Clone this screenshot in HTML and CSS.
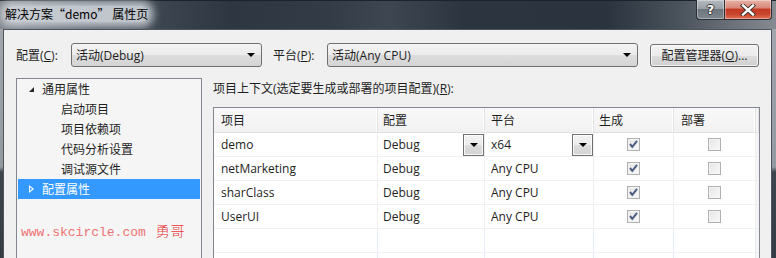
FILE: index.html
```html
<!DOCTYPE html>
<html lang="zh-CN">
<head>
    <meta charset="UTF-8">
    <title>解决方案“demo” 属性页</title>
    <link rel="stylesheet" href="styles.css">
</head>
<body>
    <div class="window">
        <div class="titlebar">
            <span class="title">解决方案“demo” 属性页</span>
            <div class="caption">
                <span class="cap-btn help">?</span>
                <span class="cap-btn close">
                    <svg width="16" height="12" viewBox="0 0 16 12">
                        <path d="M3 1.5 L13 10.5 M13 1.5 L3 10.5" stroke="#3a2a28" stroke-width="4.2" stroke-linecap="square"/>
                        <path d="M3 1.5 L13 10.5 M13 1.5 L3 10.5" stroke="#ffffff" stroke-width="2.4" stroke-linecap="square"/>
                    </svg>
                </span>
            </div>
        </div>
        <div class="frame">
            <div class="client">
                <div class="config-row">
                    <span class="cfg-label lbl-config">配置(<u>C</u>):</span>
                    <div class="combo combo-config">
                        <span>活动(Debug)</span>
                        <span class="arrow"></span>
                    </div>
                    <span class="cfg-label lbl-platform">平台(<u>P</u>):</span>
                    <div class="combo combo-platform">
                        <span>活动(Any CPU)</span>
                        <span class="arrow"></span>
                    </div>
                    <div class="btn-manager">配置管理器(<u>O</u>)...</div>
                </div>

                <div class="main">
                    <div class="tree">
                        <div class="node root"><span class="tri-open"></span>通用属性</div>
                        <div class="node child">启动项目</div>
                        <div class="node child">项目依赖项</div>
                        <div class="node child">代码分析设置</div>
                        <div class="node child">调试源文件</div>
                        <div class="node root selected"><span class="tri-closed"></span>配置属性</div>
                        <div class="watermark">www.skcircle.com <span class="wm-cn">勇哥</span></div>
                    </div>

                    <div class="context">
                        <div class="context-label">项目上下文(选定要生成或部署的项目配置)(<u>R</u>):</div>
                        <div class="grid">
                            <div class="grow header">
                                <div class="cell c1">项目</div>
                                <div class="cell c2">配置</div>
                                <div class="cell c3">平台</div>
                                <div class="cell c4">生成</div>
                                <div class="cell c5">部署</div>
                                <div class="cell c6"></div>
                            </div>
                            <div class="grow">
                                <div class="cell c1">demo</div>
                                <div class="cell c2 has-drop">Debug<span class="drop"><span class="arrow"></span></span></div>
                                <div class="cell c3 has-drop">x64<span class="drop"><span class="arrow"></span></span></div>
                                <div class="cell c4 center"><span class="check"><svg width="11" height="11" viewBox="0 0 11 11"><path d="M2 5 L4.3 7.8 L9 1.8" fill="none" stroke="#4c5f86" stroke-width="2"/></svg></span></div>
                                <div class="cell c5 center"><span class="check"></span></div>
                                <div class="cell c6"></div>
                            </div>
                            <div class="grow">
                                <div class="cell c1">netMarketing</div>
                                <div class="cell c2">Debug</div>
                                <div class="cell c3">Any CPU</div>
                                <div class="cell c4 center"><span class="check"><svg width="11" height="11" viewBox="0 0 11 11"><path d="M2 5 L4.3 7.8 L9 1.8" fill="none" stroke="#4c5f86" stroke-width="2"/></svg></span></div>
                                <div class="cell c5 center"><span class="check"></span></div>
                                <div class="cell c6"></div>
                            </div>
                            <div class="grow">
                                <div class="cell c1">sharClass</div>
                                <div class="cell c2">Debug</div>
                                <div class="cell c3">Any CPU</div>
                                <div class="cell c4 center"><span class="check"><svg width="11" height="11" viewBox="0 0 11 11"><path d="M2 5 L4.3 7.8 L9 1.8" fill="none" stroke="#4c5f86" stroke-width="2"/></svg></span></div>
                                <div class="cell c5 center"><span class="check"></span></div>
                                <div class="cell c6"></div>
                            </div>
                            <div class="grow">
                                <div class="cell c1">UserUI</div>
                                <div class="cell c2">Debug</div>
                                <div class="cell c3">Any CPU</div>
                                <div class="cell c4 center"><span class="check"><svg width="11" height="11" viewBox="0 0 11 11"><path d="M2 5 L4.3 7.8 L9 1.8" fill="none" stroke="#4c5f86" stroke-width="2"/></svg></span></div>
                                <div class="cell c5 center"><span class="check"></span></div>
                                <div class="cell c6"></div>
                            </div>
                            <div class="grow empty">
                                <div class="cell c1"></div>
                                <div class="cell c2"></div>
                                <div class="cell c3"></div>
                                <div class="cell c4"></div>
                                <div class="cell c5"></div>
                                <div class="cell c6"></div>
                            </div>
                            <div class="grow empty">
                                <div class="cell c1"></div>
                                <div class="cell c2"></div>
                                <div class="cell c3"></div>
                                <div class="cell c4"></div>
                                <div class="cell c5"></div>
                                <div class="cell c6"></div>
                            </div>
                        </div>
                    </div>
                </div>
            </div>
        </div>
    </div>
</body>
</html>
```

FILE: styles.css
```css
body {
    margin: 0;
    width: 776px;
    height: 258px;
    overflow: hidden;
    font-family: "Open Sans", "Noto Sans CJK SC", sans-serif;
    font-size: 12px;
    color: #1e1e1e;
}

.window {
    display: flex;
    flex-direction: column;
    height: 258px;
    overflow: hidden;
}

/* 标题栏 */
.titlebar {
    height: 29px;
    flex: none;
    display: flex;
    align-items: flex-start;
    background: linear-gradient(to right, #7a8087 0%, #4a535d 12%, #2d3641 30%, #323b46 42%, #3d4651 50%, #2b343f 60%, #2a333e 78%, #4c545d 88%, #868b91 100%);
    border-top: 1px solid #1e232a;
    box-sizing: border-box;
}

.title {
    margin: 5px 0 0 5px;
    line-height: 16px;
    color: #000;
    background: rgba(214, 219, 224, 0.85);
    box-shadow: 0 0 8px 5px rgba(214, 219, 224, 0.85);
    border-radius: 6px;
    font-family: "Noto Sans CJK SC", sans-serif;
    font-size: 12px;
}

.caption {
    margin-left: auto;
    margin-right: 4px;
    display: flex;
    margin-top: -1px;
}

.cap-btn {
    height: 20px;
    box-sizing: border-box;
    border: 1px solid #2c3036;
    border-top: none;
    display: flex;
    align-items: center;
    justify-content: center;
    box-shadow: inset 0 0 0 1px rgba(255, 255, 255, 0.35);
}

.help {
    width: 28px;
    border-radius: 0 0 0 4px;
    border-right: none;
    background: linear-gradient(#b5bbc1 0%, #99a0a7 45%, #6e757d 50%, #7f868d 100%);
    color: #fff;
    font-family: "DejaVu Sans", sans-serif;
    font-weight: bold;
    font-size: 13px;
    text-shadow: 1px 0 0 #333, -1px 0 0 #333, 0 1px 0 #333, 0 -1px 0 #333;
}

.close {
    width: 48px;
    border-radius: 0 0 4px 0;
    background: linear-gradient(#e6b2a6 0%, #d9897a 40%, #c43b25 50%, #c9452e 75%, #dd7358 100%);
}

/* 外框 */
.frame {
    flex: 1;
    display: flex;
    padding: 0 4px 0 3px;
    background: linear-gradient(#a0a6ac 0px, #9299a0 138px, #3c444d 143px, #343b44 100%);
    min-height: 0;
}

.client {
    flex: 1;
    border: 1px solid #4e555c;
    border-bottom: none;
    background: #f0f0f0;
    padding: 13px 11px 0 12px;
    overflow: hidden;
}

/* 配置行 */
.config-row {
    display: flex;
    align-items: center;
    height: 24px;
}

.cfg-label {
    flex: none;
}

.lbl-config {
    width: 55px;
}

.lbl-platform {
    width: 54px;
    margin-left: 11px;
}

.combo {
    height: 24px;
    box-sizing: border-box;
    border: 1px solid #707070;
    border-radius: 3px;
    background: linear-gradient(#f3f3f3 0%, #ebebeb 50%, #dddddd 51%, #d4d4d4 100%);
    display: flex;
    align-items: center;
    padding: 0 6px 0 4px;
    flex: none;
}

.combo-config {
    width: 191px;
}

.combo-platform {
    width: 311px;
}

.arrow {
    width: 0;
    height: 0;
    border-left: 4px solid transparent;
    border-right: 4px solid transparent;
    border-top: 4px solid #000;
    margin-left: auto;
}

.btn-manager {
    margin-left: 12px;
    width: 109px;
    height: 23px;
    box-sizing: border-box;
    border: 1px solid #707070;
    border-radius: 3px;
    background: linear-gradient(#f2f2f2 0%, #ebebeb 50%, #dddddd 51%, #cfcfcf 100%);
    box-shadow: inset 0 0 0 1px rgba(255, 255, 255, 0.7);
    display: flex;
    align-items: center;
    justify-content: center;
}

/* 左侧树 */
.main {
    display: flex;
    margin-top: 11px;
    height: 180px;
}

.tree {
    width: 186px;
    box-sizing: border-box;
    border: 1px solid #828790;
    border-bottom: none;
    background: #f5f5f5;
    padding: 0 1px;
    flex: none;
}

.node {
    height: 20px;
    line-height: 20px;
    display: flex;
    align-items: center;
    font-family: "Noto Sans CJK SC", sans-serif;
}

.root {
    padding-left: 11px;
}

.child {
    padding-left: 43px;
}

.tri-open {
    width: 0;
    height: 0;
    border-left: 5px solid transparent;
    border-bottom: 5px solid #262626;
    margin-right: 8px;
    margin-top: 1px;
}

.tri-closed {
    width: 0;
    height: 0;
    border-top: 4px solid transparent;
    border-bottom: 4px solid transparent;
    border-left: 5px solid #fff;
    margin-right: 8px;
    position: relative;
}

.tri-closed::after {
    content: "";
    position: absolute;
    left: -4px;
    top: -2px;
    border-top: 2px solid transparent;
    border-bottom: 2px solid transparent;
    border-left: 2px solid #3399ff;
}

.selected {
    background: #3399ff;
    color: #fff;
}

.watermark {
    margin: 21px 0 0 3px;
    font-family: "Liberation Mono", monospace;
    font-size: 13px;
    color: #f07272;
    white-space: nowrap;
}

.wm-cn {
    font-family: "Noto Sans CJK SC", sans-serif;
    font-weight: 300;
    font-size: 14px;
    color: #e83a3a;
    margin-left: 2px;
    letter-spacing: 1px;
}

/* 右侧网格 */
.context {
    margin-left: 11px;
    width: 547px;
    flex: none;
}

.context-label {
    line-height: 22px;
    margin-bottom: 7px;
}

.grid {
    border: 1px solid #828790;
    border-bottom: none;
    background: #fff;
}

.grow {
    display: grid;
    grid-template-columns: 164px 107px 109px 80px 82px 1fr;
    height: 23px;
    border-bottom: 1px solid #f0f0f0;
}

.grow.header {
    height: 24px;
    background: linear-gradient(#f9f9f9, #f1f1f1);
    border-bottom: 1px solid #e2e2e2;
}

.cell {
    border-right: 1px solid #f0f0f0;
    display: flex;
    align-items: center;
    padding-left: 6px;
    white-space: nowrap;
}

.header .cell {
    border-right: 1px solid #e3e3e3;
    box-shadow: inset -1px 0 0 #fff;
}

.empty .cell {
    border-right-color: #e6ecf6;
}

.c1 {
    padding-left: 7px;
}

.c2, .c4 {
    padding-left: 5px;
}

.c5 {
    padding-left: 7px;
}

.c6 {
    border-right: none;
    background: #f5f5f5;
    padding: 0;
}

.header .c6 {
    box-shadow: none;
}

.center {
    justify-content: center;
    padding-left: 0;
}

.has-drop {
    padding-right: 0;
}

.drop {
    margin-left: auto;
    width: 21px;
    height: 22px;
    box-sizing: border-box;
    border: 1px solid #707070;
    background: linear-gradient(#f3f3f3 0%, #ebebeb 50%, #dddddd 51%, #d2d2d2 100%);
    box-shadow: inset 0 0 0 1px rgba(255, 255, 255, 0.8);
    display: flex;
    align-items: center;
    justify-content: center;
}

.drop .arrow {
    margin-left: 0;
}

.check {
    width: 13px;
    height: 13px;
    box-sizing: border-box;
    border: 1px solid #b1b1b1;
    background: linear-gradient(135deg, #e4e4e4, #fbfbfb);
    box-shadow: inset 0 0 0 1px #f4f4f4;
    display: flex;
    align-items: center;
    justify-content: center;
}
```
